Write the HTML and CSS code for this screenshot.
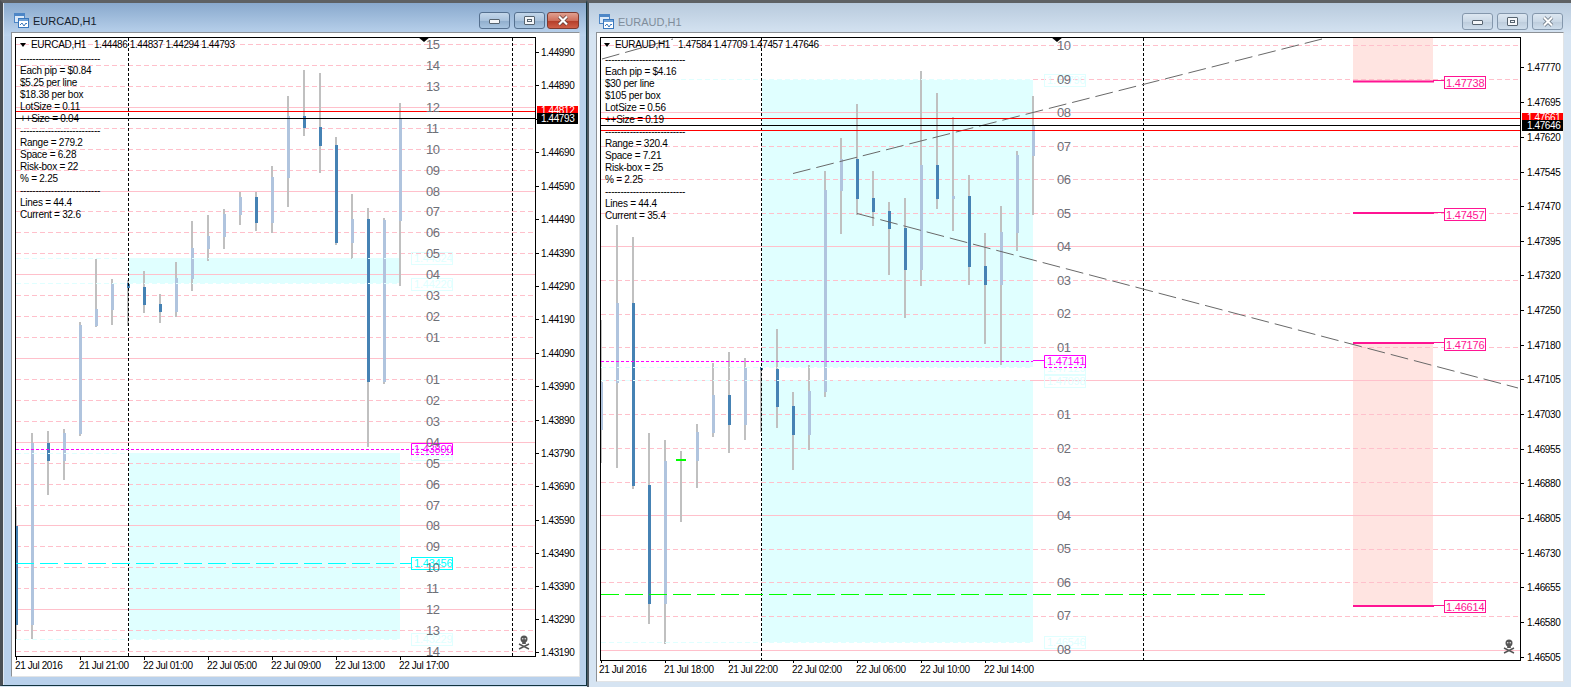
FILE: index.html
```html
<!DOCTYPE html>
<html lang="en">
<head>
<meta charset="utf-8">
<title>MT4 charts</title>
<link rel="stylesheet" href="styles.css">
</head>
<body>
<div class="desktop">

<section class="win win-left">
  <header class="win-title">
    <svg class="app-icon" viewBox="0 0 15 15"><rect x=".5" y=".5" width="10" height="9" fill="#dbe9f8" stroke="#4d86c6"/><rect x="1" y="1" width="9" height="2" fill="#4d86c6"/><rect x="4.5" y="5.5" width="10" height="9" fill="#fff" stroke="#3a78bd"/><rect x="5" y="6" width="9" height="2" fill="#6fa2d8"/><path d="M6 12l2-2 2 3 2-3 1 1" fill="none" stroke="#3a78bd"/></svg>
    <span class="win-name">EURCAD,H1</span>
    <div class="win-btns">
      <button class="btn"><i class="g-min"></i></button>
      <button class="btn"><i class="g-max"></i></button>
      <button class="btn btn-close"><svg width="14" height="11" viewBox="0 0 14 11"><path d="M3 1.5l8 8M11 1.5l-8 8" stroke="#5d3a36" stroke-width="3.6"/><path d="M3 1.5l8 8M11 1.5l-8 8" stroke="#fff" stroke-width="2.2"/></svg></button>
    </div>
  </header>
  <div class="panel">
    <svg class="chart" width="567" height="643" viewBox="12 33 567 643">
      <g class="cyan-fill"><rect x="129" y="258" width="271" height="25"/><rect x="129" y="453" width="271" height="186"/></g>
      <path class="grid-dash" d="M16 44.5H535M16 65.5H535M16 86.5H535M16 128.5H535M16 149.5H535M16 170.5H535M16 211.5H535M16 232.5H535M16 253.5H535M16 295.5H535M16 316.5H535M16 337.5H535M16 379.5H535M16 400.5H535M16 421.5H535M16 463.5H535M16 484.5H535M16 505.5H535M16 546.5H535M16 567.5H535M16 588.5H535M16 630.5H535M16 651.5H535"/>
      <path class="grid-solid" d="M16 107.5H535M16 191.5H535M16 274.5H535M16 358.5H535M16 442.5H535M16 525.5H535M16 609.5H535"/>
      <path class="wick" d="M16 507V640M32 433V639M48 431V495M64 429V480M80 322V436M96 259V327M112 279V325M128 280V326M144 271V313M160 294V323M176 262V317M192 221V291M208 215V261M224 209V249M240 192V225M256 192V231M272 166V233M288 96V207M304 70V136M320 73V173M336 137V245M352 194V259M368 208V447M384 218V384M400 103V286"/>
      <path class="bull" d="M32.5 443V625M64.5 433V461M80.5 325V434M96.5 309V326M112.5 284V310M176.5 278V312M192.5 248V279M208.5 236V249M224.5 214V237M240.5 197V215M272.5 177V223M288.5 116V178M352.5 219V243M384.5 220V382M400.5 119V221"/>
      <path class="bear" d="M16.5 526V625M48.5 443V461M128.5 283V288M144.5 287V305M160.5 304V312M256.5 197V223M304.5 116V128M320.5 127V146M336.5 145V243M368.5 219V382"/>
      <path class="pale" d="M16 258.5H400M16 283.5H400M16 453.5H400M16 639.5H400"/>
      <path class="vline" d="M128.5 38V656M512.5 38V656"/>
      <path class="ln-red" d="M16 111.5H535"/>
      <path class="ln-black" d="M16 118.5H535"/>
      <path class="ln-magenta" d="M16 449.5H411"/>
      <path class="ln-cyan" d="M16 563.5H411"/>
      <g class="box-pale">
        <rect x="411.5" y="252.5" width="41" height="12"/><text x="414" y="262">1.44324</text>
        <rect x="411.5" y="278.5" width="41" height="12"/><text x="414" y="288">1.44220</text>
        <rect x="411.5" y="448.5" width="41" height="12"/><text x="414" y="458">1.43800</text>
        <rect x="411.5" y="633.5" width="41" height="12"/><text x="414" y="643">1.43229</text>
      </g>
      <g class="box-magenta"><path d="M411.5 454V443.5H452.5V454"/><path class="dashed" d="M411 454.5H453"/><text x="414" y="453">1.43800</text></g>
      <path class="ln-magenta" d="M411 449.5H453"/>
      <g class="box-cyan"><rect x="411.5" y="557.5" width="41" height="12"/><text x="414" y="567">1.43456</text></g>
      <g class="level-nums">
        <text x="426" y="49">15</text><text x="426" y="70">14</text><text x="426" y="91">13</text><text x="426" y="112">12</text><text x="426" y="133">11</text><text x="426" y="154">10</text><text x="426" y="175">09</text><text x="426" y="196">08</text><text x="426" y="216">07</text><text x="426" y="237">06</text><text x="426" y="258">05</text><text x="426" y="279">04</text><text x="426" y="300">03</text><text x="426" y="321">02</text><text x="426" y="342">01</text><text x="426" y="384">01</text><text x="426" y="405">02</text><text x="426" y="426">03</text><text x="426" y="447">04</text><text x="426" y="468">05</text><text x="426" y="489">06</text><text x="426" y="510">07</text><text x="426" y="530">08</text><text x="426" y="551">09</text><text x="426" y="572">10</text><text x="426" y="593">11</text><text x="426" y="614">12</text><text x="426" y="635">13</text><text x="426" y="656">14</text>
      </g>
      <path class="shift" d="M418 37H430L424 42Z"/>
      <g class="skull" transform="translate(524 642)"><circle cx="0" cy="-3" r="3.5"/><rect x="-1.8" y="-1" width="3.6" height="3"/><circle class="eye" cx="-1.3" cy="-3.2" r=".8"/><circle class="eye" cx="1.3" cy="-3.2" r=".8"/><path d="M-5 2L5 7M5 2L-5 7"/></g>
      <rect class="plot" x="15.5" y="37.5" width="520" height="619"/>
      <path class="ticks" d="M535 52.5h4M535 85.5h4M535 119.5h4M535 152.5h4M535 186.5h4M535 219.5h4M535 253.5h4M535 286.5h4M535 319.5h4M535 353.5h4M535 386.5h4M535 420.5h4M535 453.5h4M535 486.5h4M535 520.5h4M535 553.5h4M535 586.5h4M535 619.5h4M535 652.5h4M16.5 656v4M80.5 656v4M144.5 656v4M208.5 656v4M272.5 656v4M336.5 656v4M400.5 656v4"/>
      <g class="axis">
        <text x="541" y="56">1.44990</text><text x="541" y="89">1.44890</text><text x="541" y="156">1.44690</text><text x="541" y="190">1.44590</text><text x="541" y="223">1.44490</text><text x="541" y="257">1.44390</text><text x="541" y="290">1.44290</text><text x="541" y="323">1.44190</text><text x="541" y="357">1.44090</text><text x="541" y="390">1.43990</text><text x="541" y="424">1.43890</text><text x="541" y="457">1.43790</text><text x="541" y="490">1.43690</text><text x="541" y="524">1.43590</text><text x="541" y="557">1.43490</text><text x="541" y="590">1.43390</text><text x="541" y="623">1.43290</text><text x="541" y="656">1.43190</text>
        <text x="15" y="669">21 Jul 2016</text><text x="79" y="669">21 Jul 21:00</text><text x="143" y="669">22 Jul 01:00</text><text x="207" y="669">22 Jul 05:00</text><text x="271" y="669">22 Jul 09:00</text><text x="335" y="669">22 Jul 13:00</text><text x="399" y="669">22 Jul 17:00</text>
      </g>
      <rect class="tag-red" x="537" y="106" width="41" height="8"/><text class="tag-text" x="541" y="114">1.44812</text>
      <rect class="tag-black" x="537" y="113" width="41" height="11"/><text class="tag-text" x="541" y="122">1.44793</text>
    </svg>
    <div class="chart-head"><i class="tri"></i><span class="sym">EURCAD,H1</span><span class="ohlc">1.44486 1.44837 1.44294 1.44793</span></div>
    <div class="info">
      <div class="rule">--------------------------</div>
      <div>Each pip = $0.84</div>
      <div>$5.25 per line</div>
      <div>$18.38 per box</div>
      <div>LotSize = 0.11</div>
      <div>++Size = 0.04</div>
      <div class="rule">--------------------------</div>
      <div>Range = 279.2</div>
      <div>Space = 6.28</div>
      <div>Risk-box = 22</div>
      <div>% = 2.25</div>
      <div class="rule">--------------------------</div>
      <div>Lines = 44.4</div>
      <div>Current = 32.6</div>
    </div>
  </div>
</section>

<section class="win win-right">
  <header class="win-title">
    <svg class="app-icon" viewBox="0 0 15 15"><rect x=".5" y=".5" width="10" height="9" fill="#dbe9f8" stroke="#4d86c6"/><rect x="1" y="1" width="9" height="2" fill="#4d86c6"/><rect x="4.5" y="5.5" width="10" height="9" fill="#fff" stroke="#3a78bd"/><rect x="5" y="6" width="9" height="2" fill="#6fa2d8"/><path d="M6 12l2-2 2 3 2-3 1 1" fill="none" stroke="#3a78bd"/></svg>
    <span class="win-name">EURAUD,H1</span>
    <div class="win-btns">
      <button class="btn"><i class="g-min"></i></button>
      <button class="btn"><i class="g-max"></i></button>
      <button class="btn"><svg width="14" height="11" viewBox="0 0 14 11"><path d="M3 1.5l8 8M11 1.5l-8 8" stroke="#5f6b78" stroke-width="3.6"/><path d="M3 1.5l8 8M11 1.5l-8 8" stroke="#fff" stroke-width="2.2"/></svg></button>
    </div>
  </header>
  <div class="panel">
    <svg class="chart" width="966" height="648" viewBox="597 33 966 648">
      <g class="cyan-fill"><rect x="762" y="80" width="271" height="287"/><rect x="762" y="380" width="271" height="262"/></g>
      <g class="rose-fill"><rect x="1353" y="38" width="80" height="44"/><rect x="1353" y="343" width="80" height="263"/></g>
      <path class="grid-dash" d="M601 45.5H1520M601 79.5H1520M601 146.5H1520M601 179.5H1520M601 213.5H1520M601 280.5H1520M601 314.5H1520M601 347.5H1520M601 414.5H1520M601 448.5H1520M601 482.5H1520M601 549.5H1520M601 582.5H1520M601 616.5H1520"/>
      <path class="grid-solid" d="M601 112.5H1520M601 246.5H1520M601 380.5H1520M601 515.5H1520M601 650.5H1520"/>
      <path class="wick" d="M601 320V463M617 225V468M633 237V489M649 433V624M665 440V644M681 451V522M697 424V488M713 363V437M729 352V453M745 358V440M761 367V432M777 329V428M793 392V470M809 365V450M825 171V397M841 138V234M857 104V215M873 171V226M889 202V275M905 198V318M921 71V286M937 93V209M953 117V231M969 175V285M985 233V344M1001 206V365M1017 151V251M1033 96V215"/>
      <path class="bull" d="M601.5 382V430M617.5 303V383M665.5 461V604M697.5 432V461M713.5 395V433M745.5 368V425M809.5 391V435M825.5 190V392M841.5 159V191M921.5 165V270M953.5 196V199M1001.5 232V285M1017.5 155V233M1033.5 126V156"/>
      <path class="bear" d="M633.5 303V486M649.5 485V604M729.5 395V425M761.5 367V370M777.5 369V407M793.5 406V435M857.5 159V199M873.5 198V212M889.5 211V229M905.5 228V270M937.5 165V199M969.5 196V267M985.5 266V285"/>
      <path class="doji" d="M676 460H686"/>
      <path class="pale" d="M601 79.5H1033M601 367.5H1033M601 380.5H1033M601 642.5H1033"/>
      <path class="vline" d="M761.5 38V660M1143.5 38V660"/>
      <path class="ln-green" d="M601 594.5H1265"/>
      <path class="trend" d="M793 173.5L1322 39M602 59L673 39M857 213.5L1518 388"/>
      <path class="ln-red" d="M601 118.5H1520M601 130.5H1520"/>
      <path class="ln-black" d="M601 125.5H1520"/>
      <path class="ln-magenta" d="M601 361.5H1033"/>
      <path class="ln-magenta-solid" d="M1033 360.5H1044"/>
      <g class="pink-lines"><path d="M1353 81.5H1434M1353 213H1434M1353 343H1434M1353 606H1434"/></g>
      <path class="pink-thin" d="M1433 80.5H1444M1433 212.5H1444M1433 342.5H1444M1433 605.5H1444"/>
      <g class="box-pale">
        <rect x="1044.5" y="74.5" width="41" height="12"/><text x="1047" y="84">1.47790</text>
        <rect x="1044.5" y="362.5" width="41" height="12"/><text x="1047" y="372">1.47129</text>
        <rect x="1044.5" y="375.5" width="41" height="12"/><text x="1047" y="385">1.47098</text>
        <rect x="1044.5" y="636.5" width="41" height="12"/><text x="1047" y="646">1.46546</text>
      </g>
      <g class="box-magenta"><path d="M1044.5 367V355.5H1085.5V367"/><path class="dashed" d="M1044 367.5H1086"/><text x="1047" y="365">1.47141</text></g>
      <g class="box-pink">
        <rect x="1444.5" y="76.5" width="41" height="12"/><text x="1446" y="87">1.47738</text>
        <rect x="1444.5" y="208.5" width="41" height="12"/><text x="1446" y="219">1.47457</text>
        <rect x="1444.5" y="338.5" width="41" height="12"/><text x="1446" y="349">1.47176</text>
        <rect x="1444.5" y="600.5" width="41" height="12"/><text x="1446" y="611">1.46614</text>
      </g>
      <g class="level-nums">
        <text x="1057" y="50">10</text><text x="1057" y="84">09</text><text x="1057" y="117">08</text><text x="1057" y="151">07</text><text x="1057" y="184">06</text><text x="1057" y="218">05</text><text x="1057" y="251">04</text><text x="1057" y="285">03</text><text x="1057" y="318">02</text><text x="1057" y="352">01</text><text x="1057" y="419">01</text><text x="1057" y="453">02</text><text x="1057" y="486">03</text><text x="1057" y="520">04</text><text x="1057" y="553">05</text><text x="1057" y="587">06</text><text x="1057" y="620">07</text><text x="1057" y="654">08</text>
      </g>
      <path class="shift" d="M1051 37H1063L1057 42Z"/>
      <g class="skull" transform="translate(1509 646)"><circle cx="0" cy="-3" r="3.5"/><rect x="-1.8" y="-1" width="3.6" height="3"/><circle class="eye" cx="-1.3" cy="-3.2" r=".8"/><circle class="eye" cx="1.3" cy="-3.2" r=".8"/><path d="M-5 2L5 7M5 2L-5 7"/></g>
      <rect class="plot" x="600.5" y="37.5" width="920" height="623"/>
      <path class="ticks" d="M1520 67.5h4M1520 102.5h4M1520 137.5h4M1520 172.5h4M1520 206.5h4M1520 241.5h4M1520 275.5h4M1520 310.5h4M1520 345.5h4M1520 379.5h4M1520 414.5h4M1520 449.5h4M1520 483.5h4M1520 518.5h4M1520 553.5h4M1520 587.5h4M1520 622.5h4M1520 657.5h4M601.5 660v3M665.5 660v3M729.5 660v3M793.5 660v3M857.5 660v3M921.5 660v3M985.5 660v3"/>
      <g class="axis">
        <text x="1527" y="71">1.47770</text><text x="1527" y="106">1.47695</text><text x="1527" y="141">1.47620</text><text x="1527" y="176">1.47545</text><text x="1527" y="210">1.47470</text><text x="1527" y="245">1.47395</text><text x="1527" y="279">1.47320</text><text x="1527" y="314">1.47250</text><text x="1527" y="349">1.47180</text><text x="1527" y="383">1.47105</text><text x="1527" y="418">1.47030</text><text x="1527" y="453">1.46955</text><text x="1527" y="487">1.46880</text><text x="1527" y="522">1.46805</text><text x="1527" y="557">1.46730</text><text x="1527" y="591">1.46655</text><text x="1527" y="626">1.46580</text><text x="1527" y="661">1.46505</text>
        <text x="599" y="673">21 Jul 2016</text><text x="664" y="673">21 Jul 18:00</text><text x="728" y="673">21 Jul 22:00</text><text x="792" y="673">22 Jul 02:00</text><text x="856" y="673">22 Jul 06:00</text><text x="920" y="673">22 Jul 10:00</text><text x="984" y="673">22 Jul 14:00</text>
      </g>
      <rect class="tag-red" x="1522" y="113" width="41" height="8"/><text class="tag-text" x="1527" y="121">1.47661</text>
      <rect class="tag-black" x="1522" y="120" width="41" height="11"/><text class="tag-text" x="1527" y="129">1.47646</text>
    </svg>
    <div class="chart-head"><i class="tri"></i><span class="sym">EURAUD,H1</span><span class="ohlc">1.47584 1.47709 1.47457 1.47646</span></div>
    <div class="info">
      <div class="rule">--------------------------</div>
      <div>Each pip = $4.16</div>
      <div>$30 per line</div>
      <div>$105 per box</div>
      <div>LotSize = 0.56</div>
      <div>++Size = 0.19</div>
      <div class="rule">--------------------------</div>
      <div>Range = 320.4</div>
      <div>Space = 7.21</div>
      <div>Risk-box = 25</div>
      <div>% = 2.25</div>
      <div class="rule">--------------------------</div>
      <div>Lines = 44.4</div>
      <div>Current = 35.4</div>
    </div>
  </div>
</section>

</div>
</body>
</html>
```
FILE: styles.css
```css
* { box-sizing: border-box; }
html, body { margin: 0; height: 100%; overflow: hidden; background: #d6e4f2; }
.desktop { position: relative; width: 1571px; height: 687px; overflow: hidden; font-family: "Liberation Sans", Arial, sans-serif; }

.win { position: absolute; top: 0; height: 687px; display: flex; flex-direction: column; }
.win-left { left: 0; width: 587px; height: 686px; padding: 0 6px 6px 8px; border-style: solid; border-width: 3px 1px 1px 3px; border-color: #5e6164 #12343f #12343f #4a4f54; background: linear-gradient(#89a9cd 0, #bcd4ee 33px, #b9d1ec 33px); box-shadow: inset 1px 0 0 #dfe8f2; }
.win-right { left: 587px; width: 984px; padding: 0 7px 5px 7px; border-top: 3px solid #5e6164; border-left: 2px solid #4c565e; background: linear-gradient(#b8cadd 0, #d7e5f3 33px, #d6e4f2 33px); }

.win-title { flex: none; height: 29px; display: flex; align-items: center; padding: 6px 1px 0 3px; }
.win-right .win-title { padding-top: 8px; }
.app-icon { width: 15px; height: 15px; flex: none; }
.win-name { margin-left: 4px; font-size: 11px; color: #16222e; }
.win-right .win-name { color: #7f8d9b; }
.win-btns { margin-left: auto; display: flex; gap: 4px; }
.btn { width: 31px; height: 17px; padding: 0; display: flex; align-items: center; justify-content: center; border: 1px solid #55708f; border-radius: 3px; background: linear-gradient(#c4d7ea 0, #a9c2dc 50%, #8fadcc 51%, #a8c4e0 100%); }
.win-right .btn { border-color: #8497ac; background: linear-gradient(#dde7f1 0, #cad8e6 50%, #bccbdb 51%, #cfdeec 100%); }
.btn-close { margin-left: -2px; width: 32px; border-color: #7c3a30; background: linear-gradient(#e0a090 0, #cf6f5c 50%, #b33c28 51%, #cf5f48 100%); }
.g-min { display: block; width: 11px; height: 5px; margin-top: 2px; background: #f5f7fa; border: 1px solid #56636f; border-radius: 1px; }
.g-max { display: block; width: 11px; height: 9px; background: #f5f7fa; border: 1px solid #56636f; border-radius: 1px; box-shadow: inset 0 0 0 2px #f5f7fa, inset 0 0 0 3px #56636f; }

.panel { position: relative; flex: none; background: #fff; border: 1px solid #e2e4e6; border-top-color: #8c9196; border-left-color: #8c9196; }
.chart { display: block; font-family: "Liberation Sans", Arial, sans-serif; }

.cyan-fill rect { fill: #e0ffff; }
.rose-fill rect { fill: #ffe4e1; }
.grid-dash { fill: none; stroke: #ffc0cb; stroke-dasharray: 5 3; }
.grid-solid { fill: none; stroke: #ffc0cb; }
.wick { fill: none; stroke: #c0c0c0; stroke-width: 2; }
.bull { fill: none; stroke: #b0c4de; stroke-width: 3; }
.bear { fill: none; stroke: #4682b4; stroke-width: 3; }
.doji { fill: none; stroke: #00ff00; stroke-width: 2; }
.pale { fill: none; stroke: #e0ffff; stroke-dasharray: 5 3; }
.vline { fill: none; stroke: #000; stroke-dasharray: 3 2; }
.ln-red { fill: none; stroke: #f00; }
.ln-black { fill: none; stroke: #000; }
.ln-magenta { fill: none; stroke: #f0f; stroke-dasharray: 3 2; }
.ln-magenta-solid { fill: none; stroke: #f0f; }
.ln-cyan { fill: none; stroke: #00ffff; stroke-dasharray: 18 6; }
.ln-green { fill: none; stroke: #00ff00; stroke-dasharray: 18 6; }
.trend { fill: none; stroke: #696969; stroke-dasharray: 18 6; }
.pink-lines path { fill: none; stroke: #ff1493; stroke-width: 2; }
.pink-thin { fill: none; stroke: #ff1493; }

.box-pale rect, .box-cyan rect, .box-pink rect { fill: none; }
.box-pale rect { stroke: #e0ffff; }
.box-pale text { fill: #e0ffff; font-size: 11px; letter-spacing: -.2px; }
.box-cyan rect { stroke: #00ffff; }
.box-cyan text { fill: #00ffff; font-size: 11px; letter-spacing: -.2px; }
.box-magenta path { fill: none; stroke: #f0f; }
.box-magenta .dashed { stroke-dasharray: 3 2; }
.box-magenta text { fill: #f0f; font-size: 11px; letter-spacing: -.2px; }
.box-pink rect { stroke: #ff1493; fill: #fff; }
.box-pink text { fill: #ff1493; font-size: 11px; letter-spacing: -.2px; }

.level-nums text { fill: #6e7078; font-size: 13px; letter-spacing: -.6px; }
.shift { fill: #000; }
.skull circle, .skull rect { fill: #555; }
.skull .eye { fill: #ddd; }
.skull path { fill: none; stroke: #555; stroke-width: 1.4; }
.plot { fill: none; stroke: #000; }
.ticks { fill: none; stroke: #000; }
.axis text { fill: #000; font-size: 10px; letter-spacing: -.4px; }
.tag-red { fill: #f00; }
.tag-black { fill: #000; }
.tag-text { fill: #fff; font-size: 10px; letter-spacing: -.4px; }

.chart-head { position: absolute; left: 8px; top: 6px; display: flex; align-items: center; gap: 5px; font-size: 10px; line-height: 12px; color: #000; white-space: nowrap; }
.chart-head .sym { letter-spacing: -.3px; }
.chart-head .ohlc { letter-spacing: -.4px; margin-left: 3px; }
.win-right .chart-head { left: 7px; }
.tri { width: 0; height: 0; border-left: 3.5px solid transparent; border-right: 3.5px solid transparent; border-top: 4px solid #000; }
.info { position: absolute; left: 8px; top: 20px; font-size: 10px; line-height: 12px; color: #000; letter-spacing: -.25px; white-space: nowrap; }
.win-right .info { top: 21px; }
```
